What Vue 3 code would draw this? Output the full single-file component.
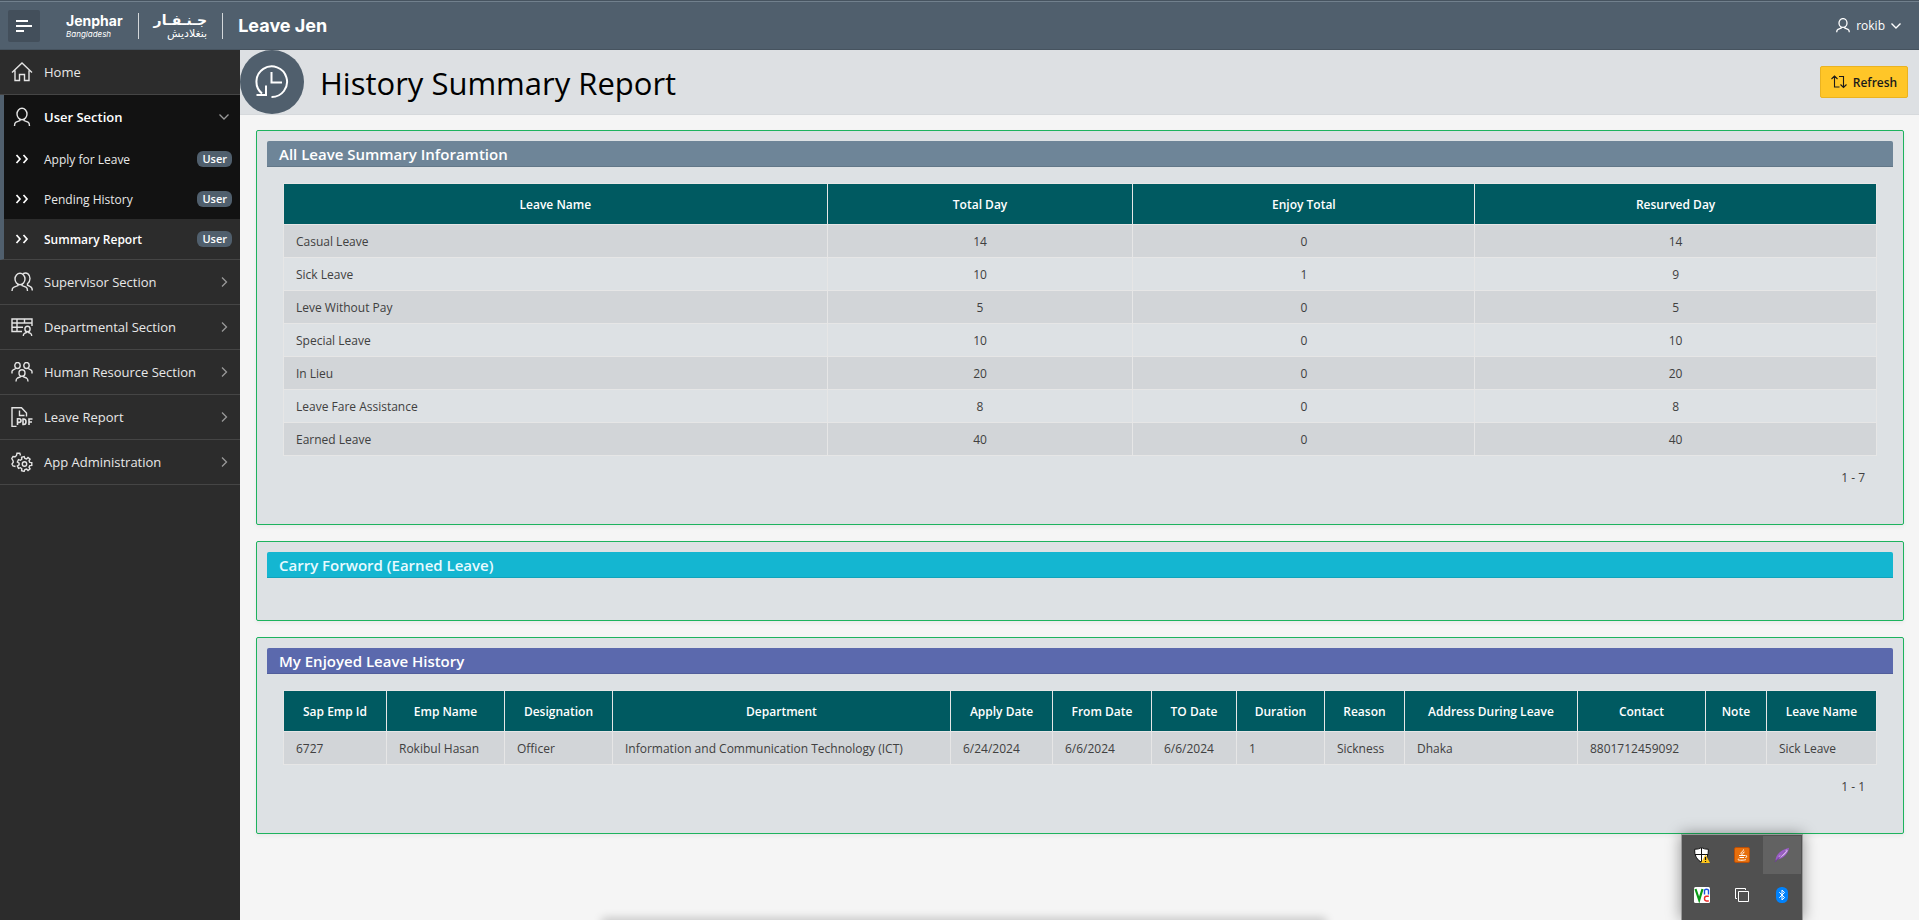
<script setup>
import { ref } from 'vue'

const userSectionOpen = ref(true)

const userLinks = [
  { label: 'Apply for Leave', badge: 'User', active: false },
  { label: 'Pending History', badge: 'User', active: false },
  { label: 'Summary Report', badge: 'User', active: true },
]

const sections = [
  { label: 'Supervisor Section', icon: 'users' },
  { label: 'Departmental Section', icon: 'table' },
  { label: 'Human Resource Section', icon: 'team' },
  { label: 'Leave Report', icon: 'pdf' },
  { label: 'App Administration', icon: 'gear' },
]

const summaryColumns = [
  { label: 'Leave Name', weight: 544 },
  { label: 'Total Day', weight: 306 },
  { label: 'Enjoy Total', weight: 342 },
  { label: 'Resurved Day', weight: 402 },
]

const summaryRows = [
  ['Casual Leave', 14, 0, 14],
  ['Sick Leave', 10, 1, 9],
  ['Leve Without Pay', 5, 0, 5],
  ['Special Leave', 10, 0, 10],
  ['In Lieu', 20, 0, 20],
  ['Leave Fare Assistance', 8, 0, 8],
  ['Earned Leave', 40, 0, 40],
]

const historyColumns = [
  { label: 'Sap Emp Id', weight: 103 },
  { label: 'Emp Name', weight: 118 },
  { label: 'Designation', weight: 108 },
  { label: 'Department', weight: 338 },
  { label: 'Apply Date', weight: 102 },
  { label: 'From Date', weight: 99 },
  { label: 'TO Date', weight: 85 },
  { label: 'Duration', weight: 88 },
  { label: 'Reason', weight: 80 },
  { label: 'Address During Leave', weight: 173 },
  { label: 'Contact', weight: 128 },
  { label: 'Note', weight: 61 },
  { label: 'Leave Name', weight: 110 },
]

const historyRows = [
  ['6727', 'Rokibul Hasan', 'Officer', 'Information and Communication Technology (ICT)', '6/24/2024', '6/6/2024', '6/6/2024', '1', 'Sickness', 'Dhaka', '8801712459092', '', 'Sick Leave'],
]

function share(columns, column) {
  const total = columns.reduce((sum, c) => sum + c.weight, 0)
  return { width: (column.weight / total) * 100 + '%' }
}

// Outline of a cog: each tooth is four points, two on the outer and two on the inner radius.
function cog(cx, cy, outer, inner, teeth) {
  const points = []
  for (let i = 0; i < teeth; i++) {
    const mid = (i / teeth) * Math.PI * 2
    const step = Math.PI / teeth
    for (const [angle, radius] of [[-0.65, inner], [-0.4, outer], [0.4, outer], [0.65, inner]]) {
      const a = mid + angle * step
      points.push((cx + radius * Math.cos(a)).toFixed(2) + ' ' + (cy + radius * Math.sin(a)).toFixed(2))
    }
  }
  return 'M' + points.join('L') + 'Z'
}

const frontCog = cog(13.5, 12, 7.4, 5.5, 7)
</script>

<template>
  <div class="app">
    <header class="topbar">
      <button class="menu-btn" type="button" aria-label="Toggle navigation">
        <svg width="16" height="12" viewBox="0 0 16 12" fill="none" stroke="#fff" stroke-width="2">
          <path d="M0 1h12M0 6h16M0 11h8" />
        </svg>
      </button>
      <a class="brand" href="#">
        <span class="brand-en"><b>Jenphar</b><i>Bangladesh</i></span>
        <span class="brand-line"></span>
        <span class="brand-ar" lang="ar" dir="rtl"><b>جـنـفـار</b><span>بنغلاديش</span></span>
        <span class="brand-line"></span>
        <span class="brand-app">Leave Jen</span>
      </a>
      <button class="account" type="button">
        <svg width="14" height="15" viewBox="0 0 14 15" fill="none" stroke="#fff" stroke-width="1.3">
          <ellipse cx="7" cy="5" rx="4" ry="4.4" />
          <path d="M5.2 8.9v1.2L2 11.4Q.7 12 .7 14.3M8.8 8.9v1.2l3.200 1.300Q13.300 12 13.300 14.300" />
        </svg>
        <span>rokib</span>
        <svg width="10" height="6" viewBox="0 0 10 6" fill="none" stroke="#fff" stroke-width="1.4"><path d="M.5.5 5 5 9.500.5" /></svg>
      </button>
    </header>

    <div class="body">
      <nav class="sidebar">
        <a class="nav-row" href="#">
          <svg class="icon" viewBox="0 0 22 20">
            <path d="M1 10.500 11 1l10 9.500M4 8.500V18.500h4.500v-6h5v6H18V8.500" />
          </svg>
          <span>Home</span>
        </a>

        <div class="group">
          <button class="nav-row open" type="button" :aria-expanded="userSectionOpen" @click="userSectionOpen = !userSectionOpen">
            <svg class="icon" viewBox="0 0 22 20">
              <ellipse cx="11" cy="7" rx="5" ry="5.700" />
              <path d="M9 12v1.600l-4 1.600Q3.500 16 3.500 19M13 12v1.600l4 1.600q1.500.8 1.500 3.800" />
            </svg>
            <span>User Section</span>
            <svg class="chev" width="10" height="10" viewBox="0 0 10 10"><path d="M.5 2.500 5 7l4.500-4.500" /></svg>
          </button>
          <ul v-if="userSectionOpen" class="sub">
            <li v-for="link in userLinks" :key="link.label">
              <a class="sub-row" :class="{ active: link.active }" href="#">
                <svg class="dbl" width="22" height="10" viewBox="0 0 22 10"><path d="M5.500 1l3.500 4-3.500 4M12.500 1l3.500 4-3.500 4" /></svg>
                <span>{{ link.label }}</span>
                <em class="pill">{{ link.badge }}</em>
              </a>
            </li>
          </ul>
        </div>

        <button v-for="s in sections" :key="s.label" class="nav-row" type="button">
          <svg class="icon" viewBox="0 0 22 20">
            <template v-if="s.icon === 'users'">
              <ellipse cx="9" cy="7" rx="5" ry="5.700" />
              <path d="M7 12v1.600l-4 1.600Q1 16 1 19M11 12v1.600l4 1.600q1.500.8 1.500 3.800M12 1.700c4-2 7 1 7 4.800 0 2.300-1 4-2.500 5.200v1.500l2.500 1.200q2.300 1 2.300 4.100" />
            </template>
            <template v-else-if="s.icon === 'table'">
              <path d="M11 14.500H1V2h20v7M1 6h20M1 10.200h11M6 2v12.500M13.500 2v4" />
              <ellipse cx="16.500" cy="12" rx="2.600" ry="2.800" />
              <path d="M15.500 14.500v1l-2 .8q-1.200.6-1.200 2.700M17.500 14.500v1l2 .8q1.200.6 1.200 2.700" />
            </template>
            <template v-else-if="s.icon === 'team'">
              <ellipse cx="6.500" cy="3.500" rx="2.700" ry="3" />
              <ellipse cx="15.500" cy="3.500" rx="2.700" ry="3" />
              <path d="M1 11.500V9.500q0-1 1.300-1.700l2.500-1.300M21 11.500V9.500q0-1-1.300-1.700l-2.500-1.300" />
              <ellipse cx="11" cy="11" rx="3" ry="3.300" />
              <path d="M9.500 14v.8l-3 1.200q-1.500.8-1.500 3.500M12.500 14v.8l3 1.200q1.500.8 1.500 3.500" />
            </template>
            <template v-else-if="s.icon === 'pdf'">
              <path d="M5.500 19.500H1V.7h9.500L15.500 6v3.500M8.500 3.500v5h5" />
              <path class="thick" d="M6.500 18v-6.200h1.700a1.800 1.800 0 0 1 0 3.600H6.500M12 12v5.500h.7q2.300 0 2.300-2.700T12.700 12ZM18 18v-6h3.500M18 15h3" />
            </template>
            <template v-else>
              <path d="M4.500 14.500l-2.500-.5-1-2 1.300-1.800-.3-1.500L.8 6.500 2 4.500l2.200.2L5.500 3.500 6 1.200h2.800l.7 2.300M12.500 4" />
              <path :d="frontCog" />
              <circle cx="13.500" cy="12" r="2.200" />
            </template>
          </svg>
          <span>{{ s.label }}</span>
          <svg class="chev" width="10" height="10" viewBox="0 0 10 10"><path d="M3 .5 7.500 5 3 9.500" /></svg>
        </button>
      </nav>

      <main class="main">
        <div class="title-bar">
          <span class="title-icon">
            <svg width="34" height="34" viewBox="0 0 34 34" fill="none" stroke="#fff" stroke-width="2">
              <path d="M16.500 32A15.300 15.300 0 1 0 7 28.500M1.500 30h9.500v-9.500M16.500 7v10.500h10.500" />
            </svg>
          </span>
          <h1>History Summary Report</h1>
          <button class="refresh" type="button">
            <svg width="16" height="14" viewBox="0 0 16 14" fill="none" stroke="#1a1a1a" stroke-width="1.100">
              <path d="M.5 4 3.500 1l3 3M3.500 1v11h5M8 1.500h4.500v11M9.500 9.500l3 3 3-3" />
            </svg>
            <span>Refresh</span>
          </button>
        </div>

        <div class="content">
          <section class="panel">
            <h2 class="slate">All Leave Summary Inforamtion</h2>
            <div class="region">
              <table class="centered">
                <colgroup>
                  <col v-for="c in summaryColumns" :key="c.label" :style="share(summaryColumns, c)" />
                </colgroup>
                <thead>
                  <tr><th v-for="c in summaryColumns" :key="c.label" scope="col">{{ c.label }}</th></tr>
                </thead>
                <tbody>
                  <tr v-for="row in summaryRows" :key="row[0]">
                    <td v-for="(cell, i) in row" :key="i">{{ cell }}</td>
                  </tr>
                </tbody>
              </table>
              <p class="range">1 - 7</p>
            </div>
          </section>

          <section class="panel">
            <h2 class="cyan">Carry Forword (Earned Leave)</h2>
            <div class="region blank"></div>
          </section>

          <section class="panel">
            <h2 class="indigo">My Enjoyed Leave History</h2>
            <div class="region">
              <table>
                <colgroup>
                  <col v-for="c in historyColumns" :key="c.label" :style="share(historyColumns, c)" />
                </colgroup>
                <thead>
                  <tr><th v-for="c in historyColumns" :key="c.label" scope="col">{{ c.label }}</th></tr>
                </thead>
                <tbody>
                  <tr v-for="row in historyRows" :key="row[0]">
                    <td v-for="(cell, i) in row" :key="i">{{ cell }}</td>
                  </tr>
                </tbody>
              </table>
              <p class="range">1 - 1</p>
            </div>
          </section>
        </div>
      </main>
    </div>

    <div class="bottom-shadow"></div>

    <div class="tray">
      <button type="button" aria-label="Security">
        <svg width="16" height="16" viewBox="0 0 16 16">
          <path d="M7.500.6Q10.500 2.300 14.400 2.300q.4 9.200-6.900 13Q.2 11.500.6 2.300 4.500 2.300 7.500.6Z" fill="#fff" stroke="#111" />
          <path d="M7.500 1v14M1 7.500h13" stroke="#111" />
          <path d="M11.500 7.500 16 16H7Z" fill="#fcc419" />
          <path d="M11.500 10v3M11.500 14v1" stroke="#111" stroke-width="1.200" />
        </svg>
      </button>
      <button type="button" aria-label="Java">
        <svg width="16" height="16" viewBox="0 0 16 16" fill="none" stroke="#fff">
          <rect x=".5" y=".5" width="15" height="15" rx="1.500" fill="#e76f0c" stroke="#b94f08" />
          <path d="M9.500 2.500C10 4.500 5.500 5 7.500 7.500M10.500 5C8 5.500 9.500 6.500 8.500 7.500M5 8.500h6M5.500 10.500h4.500M4.500 12c-3 1.500 6 1.500 7.500.5M11.500 8.500q2.500 0 0 2.500" />
        </svg>
      </button>
      <button class="hot" type="button" aria-label="Feather">
        <svg width="16" height="16" viewBox="0 0 16 16" fill="none">
          <path d="M1.500 13.500C2 7 7 3 15 .8 14.500 6 10 11.500 3.500 12.500Z" fill="#9a5cc6" />
          <path d="M5 10C8 9 11 6 13 3" stroke="#d9b8ee" stroke-width="2" />
          <path d="M.8 15 12 3.500" stroke="#713a9c" />
        </svg>
      </button>
      <button type="button" aria-label="VNC">
        <svg width="16" height="16" viewBox="0 0 16 16" fill="none">
          <rect width="16" height="16" rx="1.500" fill="#fff" />
          <path d="M1.500 2 5.200 13 8.500 2" stroke="#0b9a17" stroke-width="2.200" />
          <path d="M10.500 7.500V3q2-1.500 4 0v4.500" stroke="#1b4fe0" stroke-width="1.400" />
          <path d="M14.800 9.300h-2.500q-1.800 0-1.800 2.300t1.800 2.400h2.500" stroke="#ee2a2a" stroke-width="1.400" />
        </svg>
      </button>
      <button type="button" aria-label="Windows">
        <svg width="16" height="16" viewBox="0 0 16 16" fill="none" stroke="#fff">
          <path d="M3 11.500H1.500v-10h10V3M4.500 4.500h10v10h-10Z" />
        </svg>
      </button>
      <button type="button" aria-label="Bluetooth">
        <svg width="16" height="16" viewBox="0 0 16 16" fill="none">
          <rect x="2" width="12" height="16" rx="5.500" fill="#0082fc" />
          <path d="M5.300 5.300l5.200 5.200L8 13V3l2.500 2.500-5.200 5.200" stroke="#fff" />
        </svg>
      </button>
    </div>
  </div>
</template>

<style>
body {
  background: #f5f5f5;
}
</style>

<style scoped>
* {
  box-sizing: border-box;
}
.app {
  min-height: 100vh;
  display: flex;
  flex-direction: column;
  font-family: "Open Sans", "Noto Sans", sans-serif;
  font-size: 12px;
  color: #404040;
}
button {
  font: inherit;
  color: inherit;
  border: 0;
  background: none;
  padding: 0;
  cursor: pointer;
}
a {
  color: inherit;
  text-decoration: none;
}
.topbar {
  height: 50px;
  display: flex;
  align-items: center;
  padding: 2px 18px 0 8px;
  background: #505f6d;
  border-bottom: 1px solid #46535f;
  box-shadow: inset 0 1px #46535f, inset 0 2px #71808d;
  color: #fff;
}
.menu-btn {
  width: 32px;
  height: 32px;
  display: grid;
  place-items: center;
  border-radius: 2px;
  background: #434f5b;
}
.brand {
  display: flex;
  align-items: center;
  margin-left: 26px;
}
.brand-en,
.brand-ar {
  display: flex;
  flex-direction: column;
}
.brand-en b {
  font: 700 14px/16px Inter, sans-serif;
}
.brand-en i {
  font: italic 400 8px/10px Inter, sans-serif;
}
.brand-line {
  width: 1px;
  height: 26px;
  margin: 0 15px;
  background: #d3d7da;
}
.brand-ar {
  font-family: "DejaVu Sans", sans-serif;
}
.brand-ar b {
  font-size: 14px;
  line-height: 16px;
}
.brand-ar span {
  font-size: 11px;
  line-height: 12px;
}
.brand-app {
  font: 700 18px/24px Inter, sans-serif;
}
.account {
  display: flex;
  align-items: center;
  gap: 6px;
  margin-left: auto;
  font-weight: 500;
}
.body {
  flex: 1;
  display: flex;
}
.sidebar {
  flex: 0 0 240px;
  background: #2c2c2c;
  color: #e8e8e8;
  font-size: 13px;
  font-weight: 500;
}
.nav-row {
  width: 100%;
  height: 45px;
  display: flex;
  align-items: center;
  gap: 11px;
  padding: 0 11px;
  border-bottom: 1px solid #454545;
  text-align: left;
}
.icon {
  width: 22px;
  height: 20px;
  flex: none;
  fill: none;
  stroke: #e4e4e4;
  stroke-width: 1.4;
}
.thick {
  stroke-width: 1.6;
}
.chev {
  margin-left: auto;
  fill: none;
  stroke: #999;
  stroke-width: 1.3;
}
.group {
  border-bottom: 1px solid #454545;
  border-left: 4px solid #505f6d;
  background: #121212;
}
.nav-row.open {
  height: 44px;
  border-bottom: 0;
  padding-left: 7px;
  font-weight: 600;
  color: #fff;
}
.sub {
  list-style: none;
  margin: 0;
  padding: 0;
}
.sub-row {
  height: 40px;
  display: flex;
  align-items: center;
  gap: 11px;
  padding: 0 8px 0 7px;
  font-size: 12px;
  font-weight: 400;
}
.sub-row.active {
  background: #2c2c2c;
  color: #fff;
  font-weight: 600;
}
.dbl {
  fill: none;
  stroke: #fff;
  stroke-width: 1.7;
}
.pill {
  margin-left: auto;
  padding: 0 5px;
  border-radius: 6px;
  background: #505f6d;
  color: #fff;
  font: 600 11px/16px "Open Sans", sans-serif;
}
.main {
  flex: 1;
  min-width: 0;
  background: #f5f5f5;
}
.title-bar {
  height: 65px;
  display: flex;
  align-items: center;
  padding-right: 11px;
  background: #dde0e3;
  border-bottom: 1px solid #d6d9dc;
}
.title-icon {
  width: 64px;
  height: 64px;
  display: grid;
  place-items: center;
  border-radius: 50%;
  background: #505f6d;
}
h1 {
  margin: 0 0 0 16px;
  padding-top: 2px;
  font-size: 31px;
  line-height: 40px;
  font-weight: 500;
  color: #000;
}
.refresh {
  width: 88px;
  height: 32px;
  display: flex;
  align-items: center;
  justify-content: center;
  gap: 6px;
  margin-left: auto;
  border: 1px solid #eab321;
  border-radius: 2px;
  background: #ffc628;
  color: #1a1a1a;
  font-weight: 600;
}
.content {
  display: flex;
  flex-direction: column;
  gap: 16px;
  padding: 15px 15px 16px 16px;
}
.panel {
  padding: 10px;
  border: 1px solid #1db35e;
  border-radius: 2px;
  background: #dde1e4;
  box-shadow: 0 2px 4px rgba(0, 0, 0, 0.05);
}
h2 {
  margin: 0;
  padding: 2px 12px 0;
  border-bottom: 1px solid rgba(0, 0, 0, 0.1);
  border-radius: 2px 2px 0 0;
  font-size: 15px;
  line-height: 23px;
  font-weight: 600;
  color: #fff;
}
.slate {
  background: #6e8598;
}
.cyan {
  background: #14b6d1;
  color: #e8faff;
}
.indigo {
  background: #5b69ad;
}
.region {
  padding: 16px 16px 24px;
}
.blank {
  padding: 16px 0;
}
table {
  width: 100%;
  table-layout: fixed;
  border-collapse: collapse;
}
th,
td {
  border: 1px solid #e6e6e6;
  padding: 0 12px;
  white-space: nowrap;
}
th {
  height: 41px;
  padding: 0;
  background: #005a61;
  color: #fff;
  font-size: 12px;
  font-weight: 600;
  text-align: center;
}
td {
  height: 33px;
  font-size: 12px;
}
tbody tr:nth-child(odd) {
  background: #d2d5d8;
}
.centered td:not(:first-child) {
  text-align: center;
}
.range {
  margin: 0;
  padding: 14px 12px 4px;
  line-height: 16px;
  text-align: right;
}
.bottom-shadow {
  position: fixed;
  left: 31.5%;
  right: 31%;
  bottom: -12px;
  height: 12px;
  box-shadow: 0 0 10px 2px rgba(0, 0, 0, 0.2);
}
.tray {
  position: fixed;
  right: 116px;
  bottom: 0;
  display: grid;
  grid-template-columns: repeat(3, 40px);
  grid-template-rows: 40px 45px;
  border: 1px solid #9a9a9a;
  border-bottom: 0;
  background: #505050;
  box-shadow: 0 0 14px rgba(0, 0, 0, 0.4);
}
.tray button {
  display: grid;
  justify-items: center;
  align-content: start;
  padding-top: 12px;
}
.tray .hot {
  margin: 1px;
  padding-top: 11px;
  background: #626262;
}
</style>
